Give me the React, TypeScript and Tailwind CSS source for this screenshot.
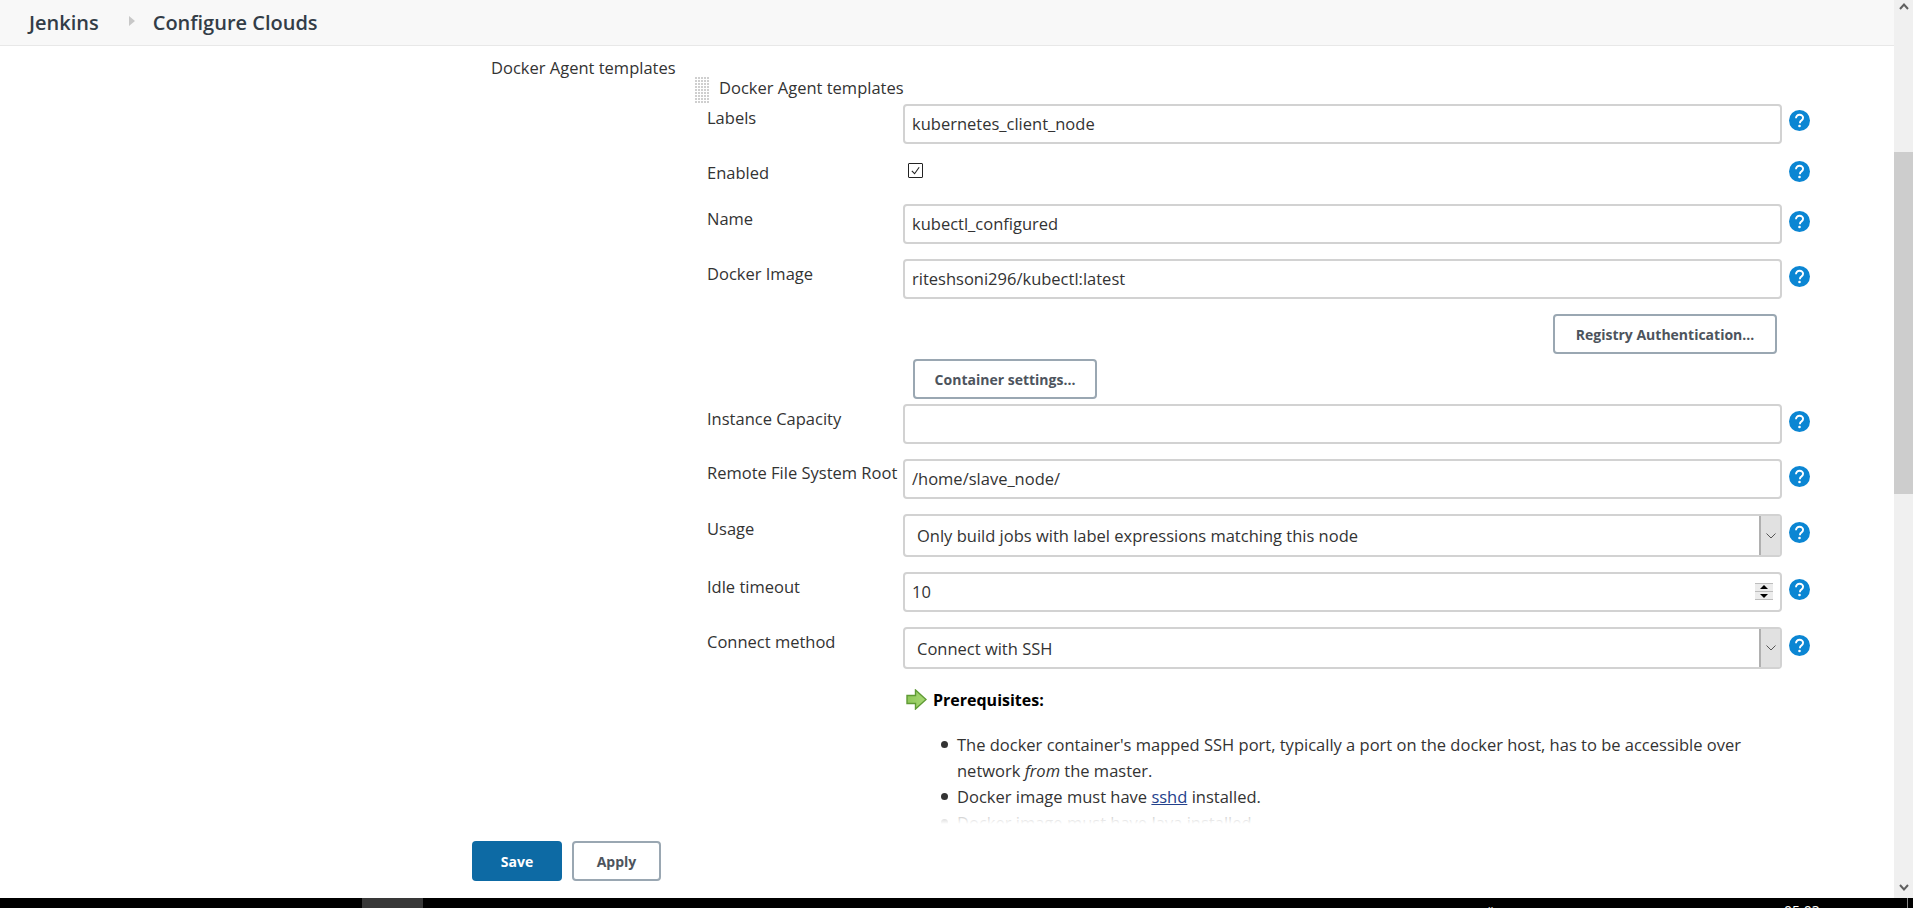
const font = { fontFamily: '"Open Sans", "Noto Sans", sans-serif' };

function HelpIcon() {
  return (
    <svg viewBox="0 0 21 21" className="w-[21px] h-[21px] shrink-0">
      <circle cx="10.5" cy="10.5" r="10.5" fill="#0b86d3" />
      <path
        d="M7 8.2c0-2.1 1.5-3.4 3.6-3.4 2.1 0 3.5 1.2 3.5 3 0 1.4-.8 2.1-1.8 2.8-.9.6-1.3 1.1-1.3 2.1v.5"
        fill="none"
        stroke="#fff"
        strokeWidth="1.9"
      />
      <circle cx="10.5" cy="16" r="1.3" fill="#fff" />
    </svg>
  );
}

function Grip() {
  const dots = [];
  for (let r = 0; r < 9; r++) {
    for (let c = 0; c < 5; c++) {
      dots.push(<rect key={r + "-" + c} x={c * 3} y={r * 3} width="2" height="2" fill="#cfcfcf" />);
    }
  }
  return (
    <svg viewBox="0 0 14 26" className="w-[14px] h-[26px]">
      {dots}
    </svg>
  );
}

function GreenArrow() {
  return (
    <svg viewBox="0 0 21 21" className="w-[21px] h-[21px] shrink-0">
      <defs>
        <linearGradient id="arrow" x1="0" y1="0" x2="1" y2="0">
          <stop offset="0" stopColor="#8fc75a" />
          <stop offset="1" stopColor="#a6d873" />
        </linearGradient>
      </defs>
      <path d="M1 6.5h8.5V1L20 10.5 9.5 20v-5.5H1z" fill="url(#arrow)" stroke="#5f9a35" strokeWidth="1.4" />
    </svg>
  );
}

function Row({
  label,
  children,
  labelTop = "pt-1",
  helpTop = "pt-[7px]",
  help = true,
  className = "",
}: {
  label: string;
  children: React.ReactNode;
  labelTop?: string;
  helpTop?: string;
  help?: boolean;
  className?: string;
}) {
  return (
    <div className={"flex " + className}>
      <div className={"w-[196px] shrink-0 text-[16.5px] leading-[22px] whitespace-nowrap text-[#333] " + labelTop}>{label}</div>
      <div className="w-[879px] shrink-0">{children}</div>
      <div className={"ml-[7px] " + helpTop}>{help && <HelpIcon />}</div>
    </div>
  );
}

function TextBox({ value = "" }: { value?: string }) {
  return (
    <div className="h-10 border-2 border-[#d2d2d2] rounded-[4px] pl-[7px] pt-px flex items-center text-[16.5px] text-[#333]">
      {value}
    </div>
  );
}

function SelectBox({ value, height }: { value: string; height: string }) {
  return (
    <div className={"flex items-stretch border-2 border-[#d2d2d2] rounded-[4px] text-[16.5px] text-[#333] " + height}>
      <div className="flex-1 flex items-center pl-3 pt-[2px]">{value}</div>
      <div className="w-[21px] bg-[#e1e1e1] border-l-2 border-[#b0b0b0] flex items-center justify-center">
        <svg viewBox="0 0 10 6" className="w-[10px] h-[6px]">
          <path d="M.5.5 5 5 9.5.5" fill="none" stroke="#555" strokeWidth="1" />
        </svg>
      </div>
    </div>
  );
}

function Button({ children, className = "" }: { children: React.ReactNode; className?: string }) {
  return (
    <div
      className={
        "h-10 flex items-center justify-center border-2 border-[#9aa7b2] rounded-[4px] bg-white text-[14px] font-bold text-[#4d545d] " +
        className
      }
    >
      {children}
    </div>
  );
}

function Bullet({ children }: { children: React.ReactNode }) {
  return (
    <li className="flex">
      <span className="w-[7px] h-[7px] mt-[9px] mr-[9px] shrink-0 rounded-full bg-[#333]" />
      <span>{children}</span>
    </li>
  );
}

export default function App() {
  return (
    <div className="h-[908px] flex flex-col overflow-hidden bg-white" style={font}>
      <div className="flex-1 min-h-0 flex">
        <div className="flex-1 min-w-0 flex flex-col relative">
          <header className="h-[46px] shrink-0 bg-[#f8f8f8] border-b border-[#e8e8e8] flex items-center pl-[29px] text-[20px] font-semibold text-[#333d47]">
            <span>Jenkins</span>
            <svg viewBox="0 0 6 10" className="w-[6px] h-[10px] ml-[30px] mr-[18px] mb-1">
              <path d="M0 0l6 5-6 5z" fill="#c8c8c8" />
            </svg>
            <span>Configure Clouds</span>
          </header>

          <main className="flex-1 min-h-0 overflow-hidden pl-[491px]">
            <div className="flex">
              <div className="w-[204px] pt-[11px] text-[16.5px] leading-[22px] text-[#333] whitespace-nowrap">
                Docker Agent templates
              </div>
              <div className="pt-[29px]">
                <div className="flex items-center h-[29px]">
                  <Grip />
                  <span className="ml-[10px] mb-[2px] text-[16.5px] text-[#333]">Docker Agent templates</span>
                </div>
                <div className="pl-3 flex flex-col">
                  <Row label="Labels" labelTop="pt-[3px]" helpTop="pt-[6px]" className="mb-[15px]">
                    <TextBox value="kubernetes_client_node" />
                  </Row>
                  <Row label="Enabled" labelTop="pt-[3px]" helpTop="pt-[2px]" className="h-[30px] mb-[15px]">
                    <div className="w-[15px] h-[15px] ml-[5px] mt-[4px] border border-[#222] rounded-[1px] flex items-center justify-center">
                      <svg viewBox="0 0 12 12" className="w-[11px] h-[11px]">
                        <path d="M2 6.5 5 9.5 10 2.5" fill="none" stroke="#222" strokeWidth="1.2" />
                      </svg>
                    </div>
                  </Row>
                  <Row label="Name" className="mb-[15px]">
                    <TextBox value="kubectl_configured" />
                  </Row>
                  <Row label="Docker Image" className="mb-[15px]">
                    <TextBox value="riteshsoni296/kubectl:latest" />
                  </Row>
                  <div className="flex justify-end w-[1070px] mb-[5px]">
                    <Button className="w-[224px]">Registry Authentication...</Button>
                  </div>
                  <div className="ml-[206px] mb-[5px]">
                    <Button className="w-[184px]">Container settings...</Button>
                  </div>
                  <Row label="Instance Capacity" className="mb-[15px]">
                    <TextBox />
                  </Row>
                  <Row label="Remote File System Root" labelTop="pt-[3px]" className="mb-[15px]">
                    <TextBox value="/home/slave_node/" />
                  </Row>
                  <Row label="Usage" helpTop="pt-2" className="mb-[15px]">
                    <SelectBox value="Only build jobs with label expressions matching this node" height="h-[43px]" />
                  </Row>
                  <Row label="Idle timeout" className="mb-[15px]">
                    <div className="relative">
                      <TextBox value="10" />
                      <div className="absolute right-[9px] top-[11px] w-[18px] h-[17px] bg-[#ececec] border-y border-[#bdbdbd] flex flex-col items-center justify-around">
                        <div className="w-0 h-0 border-x-[4px] border-x-transparent border-b-[4px] border-b-black" />
                        <div className="w-full h-px bg-[#bdbdbd]" />
                        <div className="w-0 h-0 border-x-[4px] border-x-transparent border-t-[4px] border-t-black" />
                      </div>
                    </div>
                  </Row>
                  <Row label="Connect method" helpTop="pt-2">
                    <SelectBox value="Connect with SSH" height="h-[42px]" />
                  </Row>
                  <div className="ml-[199px] mt-5 w-[860px] text-[16.5px] text-[#333]">
                    <div className="flex items-center h-[21px] font-bold text-[16px] text-black">
                      <GreenArrow />
                      <span className="ml-[6px]">Prerequisites:</span>
                    </div>
                    <ul className="pl-[35px] pt-[22px] leading-[26px]">
                      <Bullet>
                        The docker container's mapped SSH port, typically a port on the docker host, has to be accessible over network <em>from</em> the master.
                      </Bullet>
                      <Bullet>
                        Docker image must have <span className="text-[#23418c] underline">sshd</span> installed.
                      </Bullet>
                      <Bullet>
                        Docker image must have <span className="underline">Java</span> installed.
                      </Bullet>
                    </ul>
                  </div>
                </div>
              </div>
            </div>
          </main>

          <div className="absolute left-0 right-0 bottom-0 h-[86px] flex flex-col">
            <div className="h-[12px] bg-gradient-to-b from-[#ffffffa0] to-white" />
            <div className="flex-1 bg-white pl-[472px] pt-[17px] flex gap-[10px] items-start">
              <div className="w-[90px] h-10 rounded-[4px] bg-[#0d6aa4] text-white text-[14px] font-bold flex items-center justify-center">
                Save
              </div>
              <Button className="w-[89px]">Apply</Button>
            </div>
          </div>
        </div>

        <div className="w-[19px] shrink-0 bg-[#f0f0f0] flex flex-col items-center">
          <svg viewBox="0 0 10 7" className="w-[10px] h-[7px] mt-[3px] shrink-0">
            <path d="M1 6l4-4.5L9 6" fill="none" stroke="#606060" strokeWidth="2" />
          </svg>
          <div className="h-[142px] shrink-0" />
          <div className="h-[342px] w-full shrink-0 bg-[#cdcdcd]" />
          <div className="flex-1" />
          <svg viewBox="0 0 10 7" className="w-[10px] h-[7px] mb-[7px] shrink-0">
            <path d="M1 1l4 4.5L9 1" fill="none" stroke="#606060" strokeWidth="2" />
          </svg>
        </div>
      </div>

      <div className="h-[10px] shrink-0 bg-black flex overflow-hidden text-white text-[14px] leading-[20px]">
        <div className="ml-[362px] w-[61px] bg-[#383838]" />
        <div className="ml-[1065px] w-[12px] pt-px">»</div>
        <div className="ml-[284px] w-[40px] pt-[3px]">05:03</div>
        <div className="ml-[83px] w-px bg-[#888]" />
      </div>
    </div>
  );
}
